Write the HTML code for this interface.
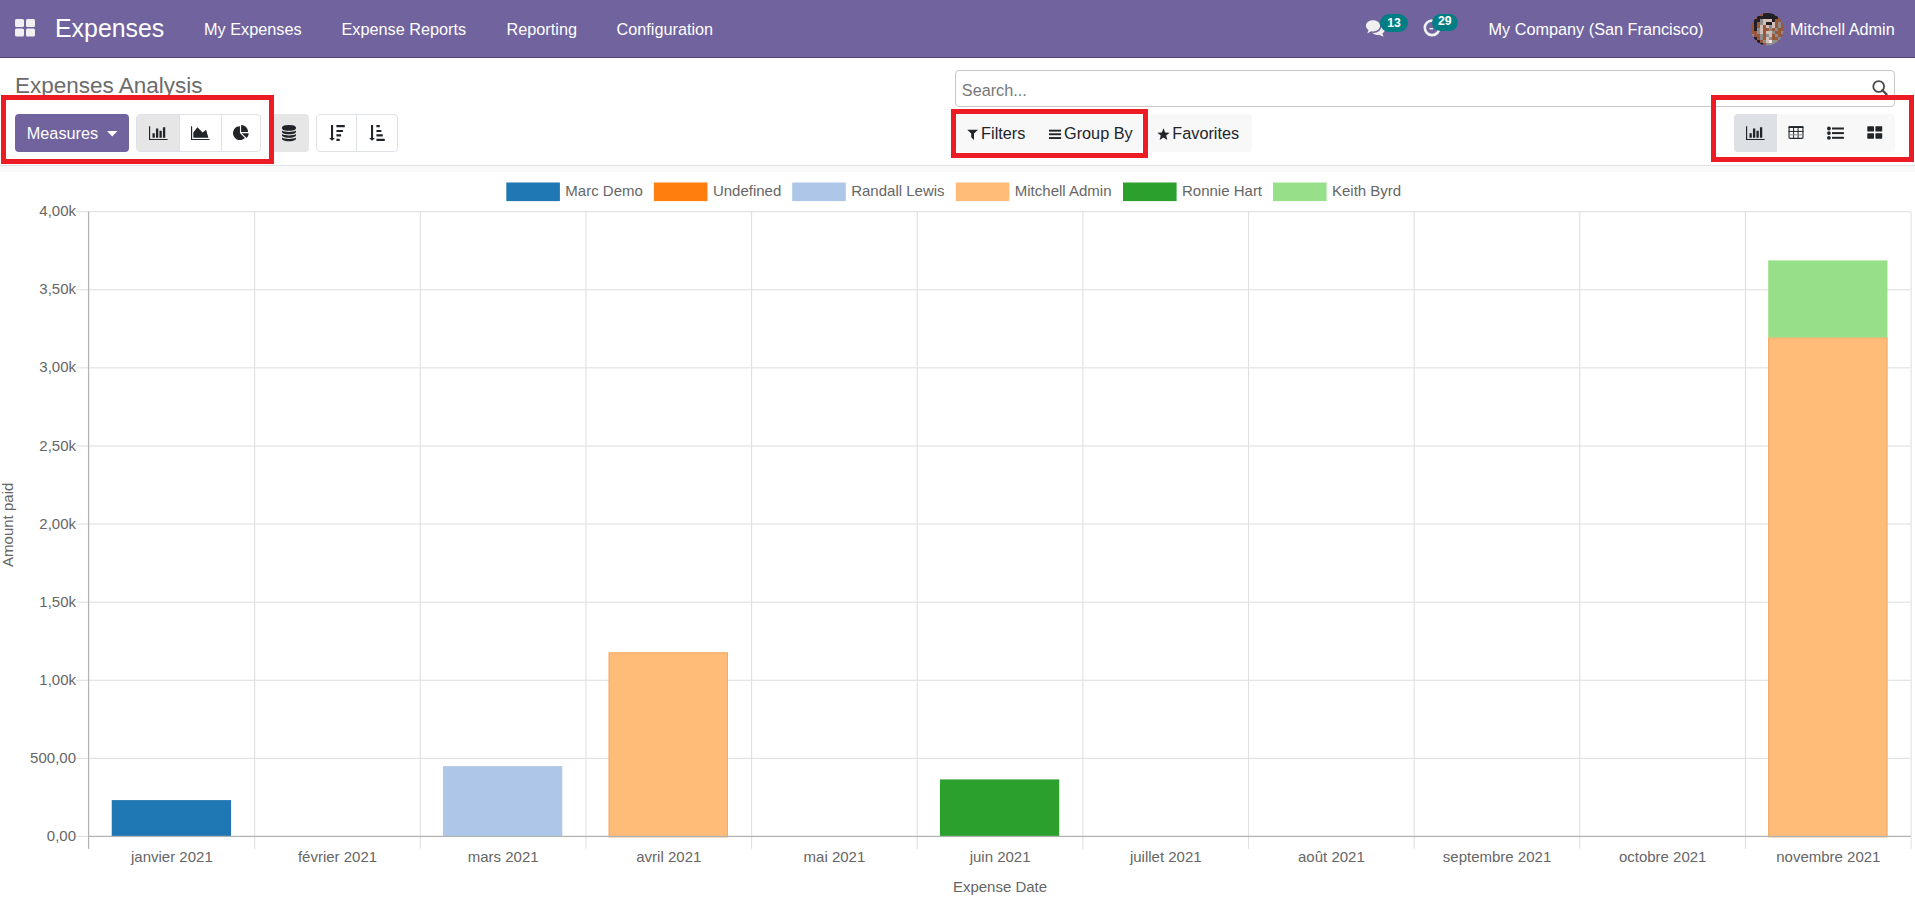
<!DOCTYPE html>
<html><head><meta charset="utf-8"><title>Expenses Analysis</title>
<style>
html,body{margin:0;padding:0;}
body{width:1915px;height:901px;overflow:hidden;position:relative;background:#fff;font-family:"Liberation Sans",sans-serif;}
.abs{position:absolute;}
.t{position:absolute;white-space:nowrap;line-height:1;}
.nav{position:absolute;left:0;top:0;width:1915px;height:57px;background:#71639e;border-bottom:1px solid #4f4576;}
.nav .t{color:#fff;font-size:16.25px;}
.tk{font-family:"Liberation Sans",sans-serif;font-size:15px;fill:#666;}
.btn{position:absolute;box-sizing:border-box;}
.ico{position:absolute;overflow:visible;}
.red{position:absolute;box-sizing:border-box;border:5px solid #ed1c24;}
.dk{fill:#212529;}
.bt{position:absolute;white-space:nowrap;line-height:1;font-size:16.25px;color:#212529;}
</style></head><body>
<div class="nav">
  <svg class="ico" style="left:15px;top:19px" width="20" height="17" viewBox="0 0 20 17">
    <rect x="0" y="0" width="9" height="8" rx="1.5" fill="#f0f0f0"/><rect x="11" y="0" width="9" height="8" rx="1.5" fill="#f0f0f0"/>
    <rect x="0" y="9.5" width="9" height="8" rx="1.5" fill="#f0f0f0"/><rect x="11" y="9.5" width="9" height="8" rx="1.5" fill="#f0f0f0"/>
  </svg>
  <div class="t" style="left:55px;top:16.1px;font-size:24.9px;">Expenses</div>
  <div class="t" style="left:204px;top:21.2px;">My Expenses</div>
  <div class="t" style="left:341.5px;top:21.2px;">Expense Reports</div>
  <div class="t" style="left:506.5px;top:21.2px;">Reporting</div>
  <div class="t" style="left:616.5px;top:21.2px;">Configuration</div>
  <svg class="ico" style="left:1365px;top:19px" width="22" height="19" viewBox="0 0 22 19">
<path d="M8 1.2C3.9 1.2 1 3.6 1 6.7C1 8.5 2 10 3.6 11.1L2.2 14.6L6.3 12.2C6.9 12.3 7.4 12.4 8 12.4C12.1 12.4 15 10 15 6.7C15 3.6 12.1 1.2 8 1.2Z" fill="#f0f0f0"/>
<path d="M16.4 6.2C16.5 6.5 16.5 6.7 16.5 7C16.5 11 12.8 13.9 8.4 13.9C7.9 13.9 7.6 13.9 7.2 13.8C8.4 15.1 10.3 15.9 12.4 15.9C13 15.9 13.5 15.8 14 15.7L18.6 17.8L17.4 14.4C19 13.4 20 11.9 20 10.2C20 8.6 18.6 7.1 16.4 6.2Z" fill="#f0f0f0"/>
</svg>
<div class="abs" style="left:1380px;top:13.8px;width:28.1px;height:18.2px;border-radius:9.1px;background:#017e84"></div>
<div class="t" style="left:1387.2px;top:17.1px;font-size:12.2px;font-weight:bold;">13</div>
<svg class="ico" style="left:1422px;top:18px" width="20" height="20" viewBox="0 0 20 20">
<circle cx="10.1" cy="9.8" r="7.3" fill="none" stroke="#f0f0f0" stroke-width="2.6"/>
<rect x="7.5" y="10" width="3.6" height="1.4" fill="#f0f0f0"/>
</svg>
<div class="abs" style="left:1432.3px;top:13.8px;width:25.8px;height:17.2px;border-radius:8.6px;background:#017e84"></div>
<div class="t" style="left:1438px;top:15px;font-size:12.2px;font-weight:bold;">29</div>
  <div class="t" style="left:1488.5px;top:21.2px;">My Company (San Francisco)</div>
  <svg class="ico" style="left:1751px;top:12.7px" width="33" height="33" viewBox="0 0 33 33">
<defs><clipPath id="avc"><circle cx="16.4" cy="16.2" r="16.2"/></clipPath></defs>
<g clip-path="url(#avc)" shape-rendering="crispEdges"><rect x="0" y="0" width="3.05" height="3.05" fill="#97593a"/><rect x="3" y="0" width="3.05" height="3.05" fill="#97593a"/><rect x="6" y="0" width="3.05" height="3.05" fill="#97593a"/><rect x="9" y="0" width="3.05" height="3.05" fill="#97593a"/><rect x="12" y="0" width="3.05" height="3.05" fill="#222024"/><rect x="15" y="0" width="3.05" height="3.05" fill="#222024"/><rect x="18" y="0" width="3.05" height="3.05" fill="#222024"/><rect x="21" y="0" width="3.05" height="3.05" fill="#222024"/><rect x="24" y="0" width="3.05" height="3.05" fill="#97593a"/><rect x="27" y="0" width="3.05" height="3.05" fill="#97593a"/><rect x="30" y="0" width="3.05" height="3.05" fill="#97593a"/><rect x="0" y="3" width="3.05" height="3.05" fill="#97593a"/><rect x="3" y="3" width="3.05" height="3.05" fill="#97593a"/><rect x="6" y="3" width="3.05" height="3.05" fill="#222024"/><rect x="9" y="3" width="3.05" height="3.05" fill="#222024"/><rect x="12" y="3" width="3.05" height="3.05" fill="#222024"/><rect x="15" y="3" width="3.05" height="3.05" fill="#222024"/><rect x="18" y="3" width="3.05" height="3.05" fill="#222024"/><rect x="21" y="3" width="3.05" height="3.05" fill="#222024"/><rect x="24" y="3" width="3.05" height="3.05" fill="#222024"/><rect x="27" y="3" width="3.05" height="3.05" fill="#97593a"/><rect x="30" y="3" width="3.05" height="3.05" fill="#97593a"/><rect x="0" y="6" width="3.05" height="3.05" fill="#97593a"/><rect x="3" y="6" width="3.05" height="3.05" fill="#222024"/><rect x="6" y="6" width="3.05" height="3.05" fill="#222024"/><rect x="9" y="6" width="3.05" height="3.05" fill="#8e8c8c"/><rect x="12" y="6" width="3.05" height="3.05" fill="#d2beb6"/><rect x="15" y="6" width="3.05" height="3.05" fill="#d2beb6"/><rect x="18" y="6" width="3.05" height="3.05" fill="#d2beb6"/><rect x="21" y="6" width="3.05" height="3.05" fill="#222024"/><rect x="24" y="6" width="3.05" height="3.05" fill="#97593a"/><rect x="27" y="6" width="3.05" height="3.05" fill="#97593a"/><rect x="30" y="6" width="3.05" height="3.05" fill="#97593a"/><rect x="0" y="9" width="3.05" height="3.05" fill="#97593a"/><rect x="3" y="9" width="3.05" height="3.05" fill="#222024"/><rect x="6" y="9" width="3.05" height="3.05" fill="#97593a"/><rect x="9" y="9" width="3.05" height="3.05" fill="#8e8c8c"/><rect x="12" y="9" width="3.05" height="3.05" fill="#d2beb6"/><rect x="15" y="9" width="3.05" height="3.05" fill="#222024"/><rect x="18" y="9" width="3.05" height="3.05" fill="#222024"/><rect x="21" y="9" width="3.05" height="3.05" fill="#d2beb6"/><rect x="24" y="9" width="3.05" height="3.05" fill="#97593a"/><rect x="27" y="9" width="3.05" height="3.05" fill="#8e8c8c"/><rect x="30" y="9" width="3.05" height="3.05" fill="#97593a"/><rect x="0" y="12" width="3.05" height="3.05" fill="#97593a"/><rect x="3" y="12" width="3.05" height="3.05" fill="#222024"/><rect x="6" y="12" width="3.05" height="3.05" fill="#97593a"/><rect x="9" y="12" width="3.05" height="3.05" fill="#d2beb6"/><rect x="12" y="12" width="3.05" height="3.05" fill="#97593a"/><rect x="15" y="12" width="3.05" height="3.05" fill="#d2beb6"/><rect x="18" y="12" width="3.05" height="3.05" fill="#8e8c8c"/><rect x="21" y="12" width="3.05" height="3.05" fill="#d2beb6"/><rect x="24" y="12" width="3.05" height="3.05" fill="#97593a"/><rect x="27" y="12" width="3.05" height="3.05" fill="#8e8c8c"/><rect x="30" y="12" width="3.05" height="3.05" fill="#97593a"/><rect x="0" y="15" width="3.05" height="3.05" fill="#97593a"/><rect x="3" y="15" width="3.05" height="3.05" fill="#222024"/><rect x="6" y="15" width="3.05" height="3.05" fill="#8e8c8c"/><rect x="9" y="15" width="3.05" height="3.05" fill="#d2beb6"/><rect x="12" y="15" width="3.05" height="3.05" fill="#97593a"/><rect x="15" y="15" width="3.05" height="3.05" fill="#97593a"/><rect x="18" y="15" width="3.05" height="3.05" fill="#8e8c8c"/><rect x="21" y="15" width="3.05" height="3.05" fill="#97593a"/><rect x="24" y="15" width="3.05" height="3.05" fill="#8e8c8c"/><rect x="27" y="15" width="3.05" height="3.05" fill="#97593a"/><rect x="30" y="15" width="3.05" height="3.05" fill="#97593a"/><rect x="0" y="18" width="3.05" height="3.05" fill="#97593a"/><rect x="3" y="18" width="3.05" height="3.05" fill="#97593a"/><rect x="6" y="18" width="3.05" height="3.05" fill="#8e8c8c"/><rect x="9" y="18" width="3.05" height="3.05" fill="#d2beb6"/><rect x="12" y="18" width="3.05" height="3.05" fill="#97593a"/><rect x="15" y="18" width="3.05" height="3.05" fill="#d2beb6"/><rect x="18" y="18" width="3.05" height="3.05" fill="#d2beb6"/><rect x="21" y="18" width="3.05" height="3.05" fill="#8e8c8c"/><rect x="24" y="18" width="3.05" height="3.05" fill="#97593a"/><rect x="27" y="18" width="3.05" height="3.05" fill="#97593a"/><rect x="30" y="18" width="3.05" height="3.05" fill="#8e8c8c"/><rect x="0" y="21" width="3.05" height="3.05" fill="#8e8c8c"/><rect x="3" y="21" width="3.05" height="3.05" fill="#97593a"/><rect x="6" y="21" width="3.05" height="3.05" fill="#97593a"/><rect x="9" y="21" width="3.05" height="3.05" fill="#8e8c8c"/><rect x="12" y="21" width="3.05" height="3.05" fill="#97593a"/><rect x="15" y="21" width="3.05" height="3.05" fill="#8e8c8c"/><rect x="18" y="21" width="3.05" height="3.05" fill="#d2beb6"/><rect x="21" y="21" width="3.05" height="3.05" fill="#97593a"/><rect x="24" y="21" width="3.05" height="3.05" fill="#8e8c8c"/><rect x="27" y="21" width="3.05" height="3.05" fill="#97593a"/><rect x="30" y="21" width="3.05" height="3.05" fill="#97593a"/><rect x="0" y="24" width="3.05" height="3.05" fill="#97593a"/><rect x="3" y="24" width="3.05" height="3.05" fill="#222024"/><rect x="6" y="24" width="3.05" height="3.05" fill="#97593a"/><rect x="9" y="24" width="3.05" height="3.05" fill="#8e8c8c"/><rect x="12" y="24" width="3.05" height="3.05" fill="#97593a"/><rect x="15" y="24" width="3.05" height="3.05" fill="#d2beb6"/><rect x="18" y="24" width="3.05" height="3.05" fill="#8e8c8c"/><rect x="21" y="24" width="3.05" height="3.05" fill="#97593a"/><rect x="24" y="24" width="3.05" height="3.05" fill="#97593a"/><rect x="27" y="24" width="3.05" height="3.05" fill="#8e8c8c"/><rect x="30" y="24" width="3.05" height="3.05" fill="#97593a"/><rect x="0" y="27" width="3.05" height="3.05" fill="#97593a"/><rect x="3" y="27" width="3.05" height="3.05" fill="#97593a"/><rect x="6" y="27" width="3.05" height="3.05" fill="#222024"/><rect x="9" y="27" width="3.05" height="3.05" fill="#97593a"/><rect x="12" y="27" width="3.05" height="3.05" fill="#8e8c8c"/><rect x="15" y="27" width="3.05" height="3.05" fill="#d2beb6"/><rect x="18" y="27" width="3.05" height="3.05" fill="#e8e6e6"/><rect x="21" y="27" width="3.05" height="3.05" fill="#8e8c8c"/><rect x="24" y="27" width="3.05" height="3.05" fill="#8e8c8c"/><rect x="27" y="27" width="3.05" height="3.05" fill="#97593a"/><rect x="30" y="27" width="3.05" height="3.05" fill="#97593a"/><rect x="0" y="30" width="3.05" height="3.05" fill="#97593a"/><rect x="3" y="30" width="3.05" height="3.05" fill="#97593a"/><rect x="6" y="30" width="3.05" height="3.05" fill="#97593a"/><rect x="9" y="30" width="3.05" height="3.05" fill="#222024"/><rect x="12" y="30" width="3.05" height="3.05" fill="#97593a"/><rect x="15" y="30" width="3.05" height="3.05" fill="#8e8c8c"/><rect x="18" y="30" width="3.05" height="3.05" fill="#8e8c8c"/><rect x="21" y="30" width="3.05" height="3.05" fill="#8e8c8c"/><rect x="24" y="30" width="3.05" height="3.05" fill="#97593a"/><rect x="27" y="30" width="3.05" height="3.05" fill="#97593a"/><rect x="30" y="30" width="3.05" height="3.05" fill="#97593a"/></g>
</svg>
  <div class="t" style="left:1790px;top:21.2px;">Mitchell Admin</div>
</div>
<div class="t" style="left:15px;top:74.7px;font-size:22.5px;color:#6b6b6b;">Expenses Analysis</div>
<div class="btn" style="left:15px;top:114px;width:113.80px;height:37.80px;background:#71639e;border-radius:4px;"></div>
<div class="t" style="left:26.80px;top:125.24px;font-size:16.25px;color:#fff;">Measures</div>
<svg class="ico" style="left:106.8px;top:131.2px" width="10.4" height="5.4" viewBox="0 0 10.4 5.4"><path d="M0 0H10.4L5.2 5.4Z" fill="#fff"/></svg>
<div class="btn" style="left:136.3px;top:114px;width:124.90px;height:37.80px;background:#fff;border:1px solid #dee2e6;border-radius:4px;"></div>
<div class="btn" style="left:137.3px;top:115px;width:42.4px;height:35.8px;background:#e6e6e6;border-radius:3px 0 0 3px"></div>
<div class="btn" style="left:179.2px;top:115px;width:1px;height:35.8px;background:#dee2e6"></div>
<div class="btn" style="left:221px;top:115px;width:1px;height:35.8px;background:#dee2e6"></div>
<svg class="ico" style="left:149px;top:125.0px" width="18.57" height="16.25" viewBox="0 0 2048 1792"><path d="M640 896v512h-256v-512h256zm384-512v1024h-256v-1024h256zm1024 1152v128h-2048v-1536h128v1408h1920zm-640-896v768h-256v-768h256zm384-384v1152h-256v-1152h256z" fill="#212529"/></svg>
<svg class="ico" style="left:191px;top:125.0px" width="18.57" height="16.25" viewBox="0 0 2048 1792"><path d="M2048 1536v128h-2048v-1536h128v1408h1920zm-384-1024l256 896h-1664v-576l448-576 576 576z" fill="#212529"/></svg>
<svg class="ico" style="left:233.4px;top:125.0px" width="15.67" height="16.25" viewBox="0 0 1728 1792"><path d="M768 890l546 546q-106 108-247.5 168t-298.5 60q-209 0-385.5-103t-279.5-279.5-103-385.5 103-385.5 279.5-279.5 385.5-103v762zm187 6h773q0 157-60 298.5t-168 247.5zm709-128h-768v-768q209 0 385.5 103t279.5 279.5 103 385.5z" fill="#212529"/></svg>
<div class="btn" style="left:270px;top:114px;width:38.70px;height:37.60px;background:#e6e6e6;border-radius:0 4px 4px 0;"></div>
<svg class="ico" style="left:282.0px;top:125.0px" width="13.93" height="16.25" viewBox="0 0 1536 1792"><path d="M768 768q237 0 443-43t325-127v170q0 69-103 128t-280 93.5-385 34.5-385-34.5-280-93.5-103-128v-170q119 84 325 127t443 43zm0 768q237 0 443-43t325-127v170q0 69-103 128t-280 93.5-385 34.5-385-34.5-280-93.5-103-128v-170q119 84 325 127t443 43zm0-384q237 0 443-43t325-127v170q0 69-103 128t-280 93.5-385 34.5-385-34.5-280-93.5-103-128v-170q119 84 325 127t443 43zm0-1152q208 0 385 34.5t280 93.5 103 128v128q0 69-103 128t-280 93.5-385 34.5-385-34.5-280-93.5-103-128v-128q0-69 103-128t280-93.5 385-34.5z" fill="#212529"/></svg>
<div class="btn" style="left:316.4px;top:114px;width:81.20px;height:37.60px;background:#fff;border:1px solid #dee2e6;border-radius:4px;"></div>
<div class="btn" style="left:356px;top:115px;width:1px;height:35.6px;background:#dee2e6"></div>
<svg class="ico" style="left:329px;top:124px" width="18" height="18" viewBox="0 0 18 18"><rect x="2" y="1" width="2.1" height="14" class="dk"/><path d="M0.1 14H6L3.05 16.8Z" class="dk"/><rect x="7.4" y="1.1" width="8.4" height="2.1" rx="0.3" class="dk"/><rect x="7.4" y="5.9" width="6.6" height="2.1" rx="0.3" class="dk"/><rect x="7.4" y="10.3" width="4.7" height="2.1" rx="0.3" class="dk"/><rect x="7.4" y="14.8" width="3.4" height="2.1" rx="0.3" class="dk"/></svg>
<svg class="ico" style="left:369px;top:124px" width="18" height="18" viewBox="0 0 18 18"><rect x="2" y="1" width="2.1" height="14" class="dk"/><path d="M0.1 14H6L3.05 16.8Z" class="dk"/><rect x="7.4" y="1.1" width="3.4" height="2.1" rx="0.3" class="dk"/><rect x="7.4" y="5.9" width="5.0" height="2.1" rx="0.3" class="dk"/><rect x="7.4" y="10.3" width="6.4" height="2.1" rx="0.3" class="dk"/><rect x="7.4" y="14.8" width="8.4" height="2.1" rx="0.3" class="dk"/></svg>
<div class="btn" style="left:955.4px;top:70px;width:939.30px;height:37.00px;background:#fff;border:1px solid #c9c9c9;border-radius:4px;"></div>
<div class="t" style="left:961.80px;top:82.34px;font-size:16.25px;color:#777;">Search...</div>
<svg class="ico" style="left:1871px;top:79px" width="18" height="18" viewBox="0 0 18 18"><circle cx="7.7" cy="7.5" r="5.4" fill="none" stroke="#4a4a4a" stroke-width="1.8"/><path d="M11.4 11.2L15.6 15.4" stroke="#4a4a4a" stroke-width="2.2" stroke-linecap="round"/></svg>
<div class="btn" style="left:956px;top:114px;width:186.00px;height:37.70px;background:#f8f8f8;border-radius:4px;"></div>
<div class="btn" style="left:1148px;top:114px;width:104.00px;height:37.70px;background:#f8f8f8;border-radius:4px;"></div>
<svg class="ico" style="left:967px;top:129px" width="12" height="12" viewBox="0 0 12 12"><path d="M0.3 0.8H11L7 4.5V10.9L4.2 8.3V4.5Z" class="dk"/></svg>
<div class="t" style="left:981.10px;top:125.24px;font-size:16.25px;color:#212529;">Filters</div>
<svg class="ico" style="left:1049px;top:129px" width="13" height="11" viewBox="0 0 13 11"><rect x="0" y="0.7" width="12.1" height="1.9" class="dk"/><rect x="0" y="4.3" width="12.1" height="1.9" class="dk"/><rect x="0" y="8.1" width="12.1" height="1.9" class="dk"/></svg>
<div class="t" style="left:1064.00px;top:125.24px;font-size:16.25px;color:#212529;">Group By</div>
<svg class="ico" style="left:1156.5px;top:127.5px" width="13" height="13" viewBox="0 0 24 24"><path d="M12 0.5L15.1 8.2L23.3 8.7L17 14L19.1 22.2L12 17.7L4.9 22.2L7 14L0.7 8.7L8.9 8.2Z" class="dk"/></svg>
<div class="t" style="left:1172.30px;top:125.24px;font-size:16.25px;color:#212529;">Favorites</div>
<div class="btn" style="left:1734.2px;top:114px;width:160.60px;height:37.60px;background:#f8f8f8;border-radius:4px;"></div>
<div class="btn" style="left:1734.2px;top:114px;width:42.7px;height:37.6px;background:#dde1e6;border-radius:4px 0 0 4px"></div>
<svg class="ico" style="left:1746px;top:125.2px" width="18.57" height="16.25" viewBox="0 0 2048 1792"><path d="M640 896v512h-256v-512h256zm384-512v1024h-256v-1024h256zm1024 1152v128h-2048v-1536h128v1408h1920zm-640-896v768h-256v-768h256zm384-384v1152h-256v-1152h256z" fill="#212529"/></svg>
<svg class="ico" style="left:1788px;top:126px" width="16" height="13" viewBox="0 0 16 13"><rect x="1.05" y="0.85" width="13.9" height="11.5" rx="0.8" fill="none" stroke="#212529" stroke-width="1.1"/><rect x="0.5" y="0.3" width="15" height="1.8" rx="0.6" class="dk"/><rect x="5.1" y="0.5" width="1" height="12" class="dk"/><rect x="9.6" y="0.5" width="1" height="12" class="dk"/><rect x="0.5" y="4.9" width="15" height="1" class="dk"/><rect x="0.5" y="8.3" width="15" height="1" fill="#8a8a8a"/></svg>
<svg class="ico" style="left:1827px;top:126px" width="17" height="14" viewBox="0 0 17 14"><circle cx="1.95" cy="2.5" r="1.9" class="dk"/><circle cx="1.95" cy="7.1" r="1.9" class="dk"/><circle cx="1.95" cy="11.8" r="1.9" class="dk"/><rect x="5" y="1.5" width="11.9" height="2" class="dk"/><rect x="5" y="6.1" width="11.9" height="2" class="dk"/><rect x="5" y="10.8" width="11.9" height="2" class="dk"/></svg>
<svg class="ico" style="left:1867px;top:126px" width="16" height="13" viewBox="0 0 16 13"><rect x="0.3" y="0.2" width="6.7" height="5.4" rx="0.6" class="dk"/><rect x="8.4" y="0.2" width="6.8" height="5.4" rx="0.6" class="dk"/><rect x="0.3" y="7.2" width="6.7" height="5.5" rx="0.6" class="dk"/><rect x="8.4" y="7.2" width="6.8" height="5.5" rx="0.6" class="dk"/></svg>
<div class="abs" style="left:0;top:165px;width:1915px;height:1px;background:#dee2e6"></div>
<div class="abs" style="left:0;top:166px;width:1915px;height:6px;background:#f9f9f9"></div>
<svg class="abs" style="left:0;top:0" width="1915" height="901">
<rect x="76" y="211.10" width="1834.65" height="1.1" fill="#e0e0e0"/>
<rect x="76" y="289.20" width="1834.65" height="1.1" fill="#e0e0e0"/>
<rect x="76" y="367.30" width="1834.65" height="1.1" fill="#e0e0e0"/>
<rect x="76" y="445.40" width="1834.65" height="1.1" fill="#e0e0e0"/>
<rect x="76" y="523.50" width="1834.65" height="1.1" fill="#e0e0e0"/>
<rect x="76" y="601.60" width="1834.65" height="1.1" fill="#e0e0e0"/>
<rect x="76" y="679.70" width="1834.65" height="1.1" fill="#e0e0e0"/>
<rect x="76" y="757.80" width="1834.65" height="1.1" fill="#e0e0e0"/>
<rect x="76" y="835.90" width="1834.65" height="1.1" fill="#e0e0e0"/>
<rect x="254.10" y="211.60" width="1.1" height="637.30" fill="#e0e0e0"/>
<rect x="419.74" y="211.60" width="1.1" height="637.30" fill="#e0e0e0"/>
<rect x="585.39" y="211.60" width="1.1" height="637.30" fill="#e0e0e0"/>
<rect x="751.03" y="211.60" width="1.1" height="637.30" fill="#e0e0e0"/>
<rect x="916.68" y="211.60" width="1.1" height="637.30" fill="#e0e0e0"/>
<rect x="1082.32" y="211.60" width="1.1" height="637.30" fill="#e0e0e0"/>
<rect x="1247.97" y="211.60" width="1.1" height="637.30" fill="#e0e0e0"/>
<rect x="1413.61" y="211.60" width="1.1" height="637.30" fill="#e0e0e0"/>
<rect x="1579.26" y="211.60" width="1.1" height="637.30" fill="#e0e0e0"/>
<rect x="1744.90" y="211.60" width="1.1" height="637.30" fill="#e0e0e0"/>
<rect x="1910.55" y="211.60" width="1.1" height="637.30" fill="#e0e0e0"/>
<rect x="111.74" y="800.10" width="119.26" height="36.30" fill="#1f77b4"/>
<rect x="443.03" y="766.10" width="119.26" height="70.30" fill="#aec7e8"/>
<rect x="608.68" y="652.40" width="119.26" height="184.00" fill="#ffbb78"/>
<rect x="609.18" y="652.90" width="118.26" height="184.00" fill="none" stroke="#eeaa66" stroke-width="1"/>
<rect x="939.97" y="779.40" width="119.26" height="57.00" fill="#2ca02c"/>
<rect x="1768.19" y="337.40" width="119.26" height="499.00" fill="#ffbb78"/>
<rect x="1768.69" y="337.90" width="118.26" height="499.00" fill="none" stroke="#eeaa66" stroke-width="1"/>
<rect x="1768.19" y="260.40" width="119.26" height="77.00" fill="#98df8a"/>
<rect x="87.95" y="211.60" width="1.25" height="637.30" fill="#b3b3b3"/>
<rect x="88.55" y="835.80" width="1822.10" height="1.25" fill="#b3b3b3"/>
<text x="76" y="216.20" text-anchor="end" class="tk">4,00k</text>
<text x="76" y="294.30" text-anchor="end" class="tk">3,50k</text>
<text x="76" y="372.40" text-anchor="end" class="tk">3,00k</text>
<text x="76" y="450.50" text-anchor="end" class="tk">2,50k</text>
<text x="76" y="528.60" text-anchor="end" class="tk">2,00k</text>
<text x="76" y="606.70" text-anchor="end" class="tk">1,50k</text>
<text x="76" y="684.80" text-anchor="end" class="tk">1,00k</text>
<text x="76" y="762.90" text-anchor="end" class="tk">500,00</text>
<text x="76" y="841.00" text-anchor="end" class="tk">0,00</text>
<text x="171.87" y="862" text-anchor="middle" class="tk">janvier 2021</text>
<text x="337.52" y="862" text-anchor="middle" class="tk">février 2021</text>
<text x="503.16" y="862" text-anchor="middle" class="tk">mars 2021</text>
<text x="668.81" y="862" text-anchor="middle" class="tk">avril 2021</text>
<text x="834.45" y="862" text-anchor="middle" class="tk">mai 2021</text>
<text x="1000.10" y="862" text-anchor="middle" class="tk">juin 2021</text>
<text x="1165.75" y="862" text-anchor="middle" class="tk">juillet 2021</text>
<text x="1331.39" y="862" text-anchor="middle" class="tk">août 2021</text>
<text x="1497.04" y="862" text-anchor="middle" class="tk">septembre 2021</text>
<text x="1662.68" y="862" text-anchor="middle" class="tk">octobre 2021</text>
<text x="1828.33" y="862" text-anchor="middle" class="tk">novembre 2021</text>
<text x="1000" y="892" text-anchor="middle" class="tk">Expense Date</text>
<text transform="translate(13.4,524.80) rotate(-90)" text-anchor="middle" class="tk">Amount paid</text>
<rect x="507.80" y="184" width="50.6" height="15.6" fill="#1f77b4" stroke="#1f77b4" stroke-width="3"/>
<text x="565.30" y="196.3" class="tk">Marc Demo</text>
<rect x="655.40" y="184" width="50.6" height="15.6" fill="#ff7f0e" stroke="#ff7f0e" stroke-width="3"/>
<text x="712.90" y="196.3" class="tk">Undefined</text>
<rect x="793.70" y="184" width="50.6" height="15.6" fill="#aec7e8" stroke="#aec7e8" stroke-width="3"/>
<text x="851.20" y="196.3" class="tk">Randall Lewis</text>
<rect x="957.30" y="184" width="50.6" height="15.6" fill="#ffbb78" stroke="#ffbb78" stroke-width="3"/>
<text x="1014.80" y="196.3" class="tk">Mitchell Admin</text>
<rect x="1124.50" y="184" width="50.6" height="15.6" fill="#2ca02c" stroke="#2ca02c" stroke-width="3"/>
<text x="1182.00" y="196.3" class="tk">Ronnie Hart</text>
<rect x="1274.50" y="184" width="50.6" height="15.6" fill="#98df8a" stroke="#98df8a" stroke-width="3"/>
<text x="1332.00" y="196.3" class="tk">Keith Byrd</text>
</svg>
<div class="red" style="left:1px;top:95px;width:273px;height:69px;"></div>
<div class="red" style="left:951px;top:109px;width:197px;height:49px;"></div>
<div class="red" style="left:1711px;top:95px;width:203px;height:67px;"></div>
</body></html>
